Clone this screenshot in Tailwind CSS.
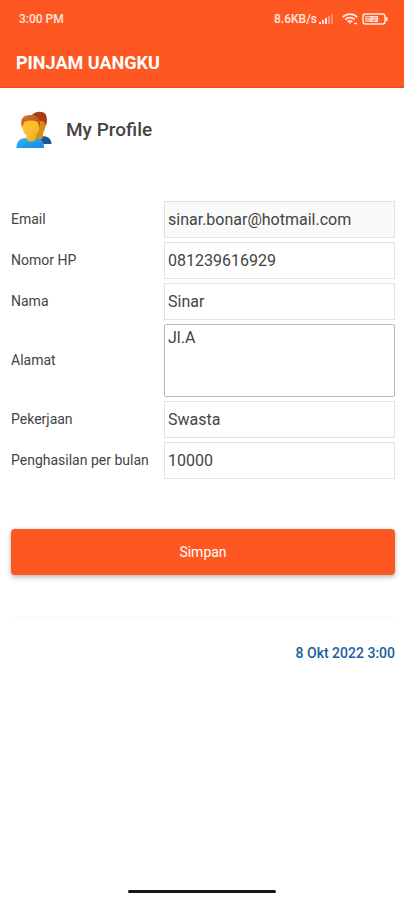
<!DOCTYPE html>
<html lang="id">
<head>
<meta charset="utf-8">
<meta name="viewport" content="width=device-width, initial-scale=1">
<title>Pinjam Uangku</title>
<script src="https://cdn.jsdelivr.net/npm/@tailwindcss/browser@4"></script>
</head>
<body class="flex min-h-screen flex-col bg-white font-['Roboto',sans-serif] text-[#444]">
<header class="border-b border-[#f04a18] bg-[#ff5722] text-white">
  <div class="flex h-[38px] items-center justify-between pr-4 pl-[19px] text-[12px] font-medium text-white/85">
    <span>3:00 PM</span>
    <div class="flex items-center">
      <span>8.6KB/s</span>
      <svg class="mr-2 ml-px h-3 w-4" viewBox="0 0 16 12" fill="currentColor" aria-hidden="true">
        <rect x="1" y="9" width="2" height="2"/><rect x="4" y="7" width="2" height="4"/><rect x="7" y="5" width="2" height="6"/>
        <rect x="10" y="3" width="2" height="8" opacity=".45"/><rect x="13" y="1" width="2" height="10" opacity=".35"/>
      </svg>
      <svg class="mr-1 h-3 w-4" viewBox="0 0 16 12" fill="none" stroke="currentColor" stroke-width="1.7" aria-hidden="true">
        <path d="M.8 4.2C4.8.2 11.200.2 15.200 4.200M3.200 6.600C5.900 4 10.100 4 12.800 6.600M5.600 9C7 7.700 9 7.700 10.400 9"/><path d="M6.500 9.300h3L8 11z" fill="currentColor" stroke="none"/><path d="M12 10.500h3" stroke-width="1.500"/>
      </svg>
      <svg class="h-3 w-[26px]" viewBox="0 0 26 12" fill="none" stroke="currentColor" aria-hidden="true">
        <rect x="1" y="1" width="22" height="10" rx="2.500" stroke-width="1.500"/>
        <rect x="3" y="3" width="13" height="6" fill="currentColor" fill-opacity=".55" stroke="none"/>
        <path d="M8 3.500h3v2.500H8v2.500h3M12.500 3.500h3v5h-3M13 6h2.500" stroke-width="1"/>
        <path d="M24.800 4v4" stroke-width="1.600"/>
      </svg>
    </div>
  </div>
  <h1 class="flex h-[49px] items-center px-4 text-[18px] font-bold">PINJAM UANGKU</h1>
</header>

<main class="pr-[9px] pl-[11px]">
  <div class="mt-[22px] flex h-10 items-center">
    <svg class="ml-[5px] h-[38px] w-9" viewBox="0 0 36 38" aria-hidden="true">
      <defs>
        <linearGradient id="face" x1="0" y1="0" x2="1" y2="1"><stop offset="0" stop-color="#ffc834"/><stop offset=".6" stop-color="#fbbb2c"/><stop offset="1" stop-color="#e8951a"/></linearGradient>
        <linearGradient id="shirt" x1="0" y1="0" x2="1" y2="1"><stop offset="0" stop-color="#2bb6f3"/><stop offset="1" stop-color="#158ae0"/></linearGradient>
        <linearGradient id="hair" x1="0" y1="0" x2="1" y2="1"><stop offset="0" stop-color="#d9742c"/><stop offset="1" stop-color="#b5481a"/></linearGradient>
      </defs>
      <path d="M22 26C30 24 35 26 35.500 33H22z" fill="#1a559c"/>
      <path d="M20 7H29C31 13 29 19 27 22V26C26 29 23 30 20 28z" fill="#d98c15"/>
      <path d="M16 4C20-.5 28 0 30 4C31.500 8 31 12 30 15C29 12 28 10 25 10L20 9z" fill="#a83c14"/>
      <path d="M0.500 37C0.500 30 4 27.500 10 27H19C25 27.500 28 30 28 37z" fill="url(#shirt)"/>
      <path d="M6.500 11C8 6 22 6 23.500 11C24.500 17 22.500 22 20 24.500V28C18 31.500 12 31.500 10.500 28V24.500C7.500 22 5.500 17 6.500 11z" fill="url(#face)"/>
      <path d="M6 17C4.500 11 5 7 9 5C13 3.500 18 3.500 21 6C24.500 9 24.500 13 23.500 17C23 14 22.500 12 21 10.500C17 9 13 9.500 9 10.500C7.500 12 7 14 6 17z" fill="url(#hair)"/>
    </svg>
    <h2 class="ml-[14px] text-[19px] font-medium">My Profile</h2>
  </div>

  <form>
    <div class="mt-[51px] grid grid-cols-[149px_minmax(0,1fr)] items-center gap-1 text-[14px]">
      <label for="email">Email</label>
      <input id="email" type="email" readonly value="sinar.bonar@hotmail.com" class="h-[37px] w-full border border-[#e2e2e2] bg-[#fafafa] px-[3px] text-[16px]">
      <label for="hp">Nomor HP</label>
      <input id="hp" type="tel" value="081239616929" class="h-[37px] w-full border border-[#e2e2e2] bg-white px-[3px] text-[16px]">
      <label for="nama">Nama</label>
      <input id="nama" type="text" value="Sinar" class="h-[37px] w-full border border-[#e2e2e2] bg-white px-[3px] text-[16px]">
      <label for="alamat">Alamat</label>
      <textarea id="alamat" class="block h-[73px] w-full resize-none rounded-xs border border-[#b8b8b8] bg-white px-[3px] pt-px text-[16px]">Jl.A</textarea>
      <label for="kerja">Pekerjaan</label>
      <input id="kerja" type="text" value="Swasta" class="h-[37px] w-full border border-[#e2e2e2] bg-white px-[3px] text-[16px]">
      <label for="gaji" class="whitespace-nowrap">Penghasilan per bulan</label>
      <input id="gaji" type="text" inputmode="numeric" value="10000" class="h-[37px] w-full border border-[#e2e2e2] bg-white px-[3px] text-[16px]">
    </div>
    <button type="submit" class="mt-[50px] h-[46px] w-full rounded-sm bg-[#ff5722] text-[14px] text-white shadow-[0_2px_5px_rgba(0,0,0,0.3)]">Simpan</button>
  </form>
  <hr class="mt-[42px] border-[#f6f6f6]">
  <p class="mt-[25px] text-right text-[14px] leading-5 font-medium text-[#17609f]">8 Okt 2022 3:00</p>
</main>

<div class="mx-auto mt-auto mb-[7px] h-[3px] w-[148px] rounded-full bg-[#161616]"></div>
</body>
</html>
